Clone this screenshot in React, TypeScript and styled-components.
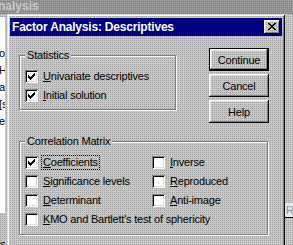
import styled, { createGlobalStyle } from "styled-components";

// patrón de tramado (1 punto oscuro cada 2x2)
const dither = (base: string, dot: string) => `
  background-color: ${base};
  background-image: linear-gradient(to bottom, transparent 1px, ${base} 1px),
    linear-gradient(to right, ${dot} 1px, transparent 1px);
  background-size: 2px 2px;
  background-attachment: fixed;
`;

const face = dither("#c8c8c8", "#a0a0a0");

const GlobalStyle = createGlobalStyle`
  body {
    margin: 0;
    font-family: "Liberation Sans", Arial, sans-serif;
    font-size: 11px;
    color: #000;
  }
`;

const Screen = styled.div`
  width: 293px;
  height: 245px;
  overflow: hidden;
  display: grid;
  grid-template-columns: 7px 278px 1fr;
  grid-template-rows: 14px 1fr;
  ${face}
`;

// ventana de atrás
const ParentTitle = styled.div`
  grid-column: 1 / -1;
  ${dither("#8a8a8a", "#a8a8a8")}
  color: #c8c8c8;
  font-weight: 700;
  font-size: 12px;
  line-height: 13px;
  padding-left: 0;
  overflow: hidden;
  white-space: nowrap;

  span {
    margin-left: -2px;
  }
`;

const LeftStrip = styled.div`
  display: flex;
  flex-direction: column;
  overflow: hidden;
`;

const ListPanel = styled.div`
  margin-top: 3px;
  width: 5px;
  height: 196px;
  background: #fff;
  overflow: hidden;
  padding-top: 28px;
  box-sizing: border-box;
  white-space: nowrap;
  line-height: 17px;

  div {
    margin-left: -1px;
  }
`;

const LeftFoot = styled.div`
  margin-top: 26px;
  width: 5px;
  overflow: hidden;
  line-height: 11px;
`;

const RightStrip = styled.div`
  overflow: hidden;
  padding-top: 189px;
`;

const SideTab = styled.div`
  height: 14px;
  border-bottom: 1px solid #000;
  background: #e8e8e8;
  color: #909090;
  line-height: 14px;
  white-space: nowrap;
  padding-left: 1px;
`;

// diálogo
const Dialog = styled.div`
  align-self: start;
  height: 240px;
  box-sizing: border-box;
  padding: 4px 3px 0 3px;
  ${face}
  box-shadow: inset 1px 1px 0 #dfdfdf, inset -1px -1px 0 #000,
    inset 2px 2px 0 #fff, inset -2px -2px 0 #808080;
`;

const TitleBar = styled.div`
  height: 18px;
  background: #000080;
  display: flex;
  align-items: center;
  justify-content: space-between;
  padding: 0 2px;
`;

const TitleText = styled.span`
  color: #fff;
  font-weight: 700;
  font-size: 12px;
  letter-spacing: -0.2px;
  white-space: nowrap;
`;

const CloseButton = styled.button`
  appearance: none;
  border: 0;
  padding: 0;
  width: 16px;
  height: 14px;
  display: flex;
  align-items: center;
  justify-content: center;
  ${face}
  box-shadow: inset -1px -1px 0 #000, inset 1px 1px 0 #fff,
    inset -2px -2px 0 #808080, inset 2px 2px 0 #dfdfdf;

  svg {
    display: block;
    margin: 0 1px 1px 0;
  }
`;

const Body = styled.div`
  padding: 0 13px 0 9px;
`;

const TopRow = styled.div`
  display: flex;
  justify-content: space-between;
  align-items: flex-start;
`;

const Group = styled.div<{ $w: number; $h: number; $mt: number }>`
  position: relative;
  box-sizing: border-box;
  width: ${({ $w }) => $w}px;
  height: ${({ $h }) => $h}px;
  margin-top: ${({ $mt }) => $mt}px;
  padding: 11px 0 0 5px;
  border: 1px solid #808080;
  box-shadow: 1px 1px 0 #fff, inset 1px 1px 0 #fff;
`;

const Legend = styled.span`
  position: absolute;
  top: -7px;
  left: 5px;
  padding: 0 2px;
  line-height: 13px;
  letter-spacing: -0.2px;
  white-space: nowrap;
  ${face}
`;

const CheckGrid = styled.div<{ $cols?: string }>`
  display: grid;
  grid-template-columns: ${({ $cols }) => $cols || "1fr"};
  grid-auto-rows: 19px;
`;

const CheckRow = styled.div<{ $span?: boolean }>`
  display: flex;
  align-items: center;
  gap: 4px;
  white-space: nowrap;
  grid-column: ${({ $span }) => ($span ? "1 / -1" : "auto")};
`;

const Box = styled.span`
  flex: none;
  width: 13px;
  height: 13px;
  background: #fff;
  display: flex;
  align-items: center;
  justify-content: center;
  box-shadow: inset 1px 1px 0 #808080, inset -1px -1px 0 #fff,
    inset 2px 2px 0 #000, inset -2px -2px 0 #dfdfdf;

  svg {
    display: block;
  }
`;

const Label = styled.span<{ $focus?: boolean }>`
  line-height: 13px;
  padding: 0 1px;
  letter-spacing: -0.2px;
  outline: ${({ $focus }) => ($focus ? "1px dotted #000" : "none")};
`;

const Key = styled.span`
  text-decoration: underline;
`;

const ButtonColumn = styled.div`
  margin-top: 12px;
  display: flex;
  flex-direction: column;
  gap: 3px;
`;

const PushButton = styled.button<{ $default?: boolean }>`
  appearance: none;
  border: 0;
  width: 60px;
  height: 23px;
  padding: 0;
  font-family: "Liberation Sans", Arial, sans-serif;
  font-size: 11px;
  letter-spacing: -0.2px;
  color: #000;
  ${face}
  box-shadow: ${({ $default }) =>
    $default
      ? "inset 0 0 0 1px #000, inset -2px -2px 0 #000, inset 2px 2px 0 #fff, inset -3px -3px 0 #808080, inset 3px 3px 0 #dfdfdf"
      : "inset -1px -1px 0 #000, inset 1px 1px 0 #fff, inset -2px -2px 0 #808080, inset 2px 2px 0 #dfdfdf"};
`;

const CheckMark = () => (
  <svg width="7" height="7" viewBox="0 0 7 7" shapeRendering="crispEdges">
    <path
      fill="#000"
      d="M6 0h1v1h-1z M5 1h2v1h-2z M0 2h1v1h-1z M4 2h3v1h-3z M0 3h2v1h-2z M3 3h3v1h-3z M0 4h5v1h-5z M1 5h3v1h-3z M2 6h1v1h-1z"
    />
  </svg>
);

const CloseGlyph = () => (
  <svg width="8" height="7" viewBox="0 0 8 7" shapeRendering="crispEdges">
    <path
      fill="#000"
      d="M0 0h2v1h-2z M6 0h2v1h-2z M1 1h2v1h-2z M5 1h2v1h-2z M2 2h4v1h-4z M3 3h2v1h-2z M2 4h4v1h-4z M1 5h2v1h-2z M5 5h2v1h-2z M0 6h2v1h-2z M6 6h2v1h-2z"
    />
  </svg>
);

type CheckProps = {
  k: string;
  rest: string;
  checked?: boolean;
  focus?: boolean;
  span?: boolean;
};

const Check = ({ k, rest, checked, focus, span }: CheckProps) => (
  <CheckRow $span={span}>
    <Box>{checked && <CheckMark />}</Box>
    <Label $focus={focus}>
      <Key>{k}</Key>
      {rest}
    </Label>
  </CheckRow>
);

export default function App() {
  return (
    <>
      <GlobalStyle />
      <Screen>
        <ParentTitle>
          <span>nalysis</span>
        </ParentTitle>

        <LeftStrip>
          <ListPanel>
            <div>o</div>
            <div>H</div>
            <div>a</div>
            <div>[s</div>
            <div>e</div>
          </ListPanel>
          <LeftFoot>s</LeftFoot>
        </LeftStrip>

        <Dialog>
          <TitleBar>
            <TitleText>Factor Analysis: Descriptives</TitleText>
            <CloseButton aria-label="Close">
              <CloseGlyph />
            </CloseButton>
          </TitleBar>

          <Body>
            <TopRow>
              <Group $w={157} $h={55} $mt={19}>
                <Legend>Statistics</Legend>
                <CheckGrid>
                  <Check k="U" rest="nivariate descriptives" checked />
                  <Check k="I" rest="nitial solution" checked />
                </CheckGrid>
              </Group>

              <ButtonColumn>
                <PushButton $default>Continue</PushButton>
                <PushButton>Cancel</PushButton>
                <PushButton>Help</PushButton>
              </ButtonColumn>
            </TopRow>

            <Group $w={249} $h={94} $mt={18}>
              <Legend>Correlation Matrix</Legend>
              <CheckGrid $cols="127px 1fr">
                <Check k="C" rest="oefficients" checked focus />
                <Check k="I" rest="nverse" />
                <Check k="S" rest="ignificance levels" />
                <Check k="R" rest="eproduced" />
                <Check k="D" rest="eterminant" />
                <Check k="A" rest="nti-image" />
                <Check k="K" rest="MO and Bartlett's test of sphericity" span />
              </CheckGrid>
            </Group>
          </Body>
        </Dialog>

        <RightStrip>
          <SideTab>Re</SideTab>
        </RightStrip>
      </Screen>
    </>
  );
}
